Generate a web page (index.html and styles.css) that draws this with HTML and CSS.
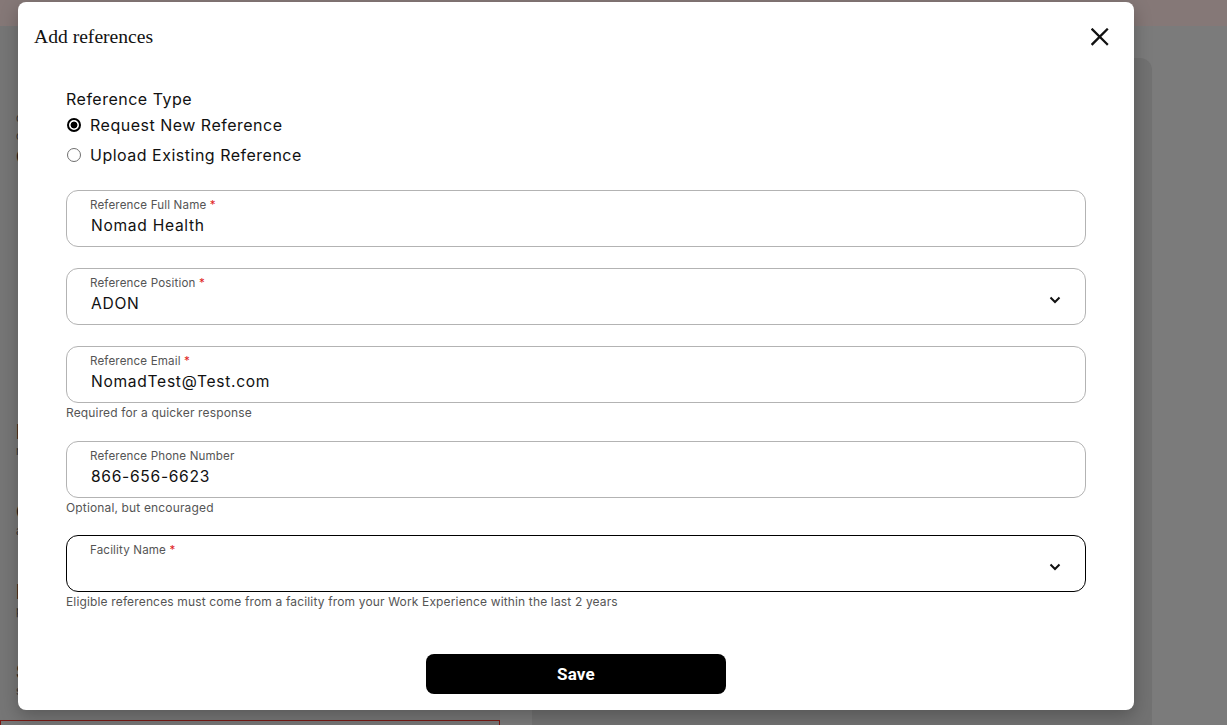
FILE: index.html
```html
<!DOCTYPE html>
<html lang="en">
<head>
<meta charset="utf-8">
<title>Add references</title>
<link rel="stylesheet" href="styles.css">
</head>
<body>
<div class="page">
  <div class="banner"></div>
  <div class="page-main">
    <div class="page-left">
      <div class="bg-item small"><span class="bg-s">c</span><span class="bg-s">c</span><span class="bg-t">C</span></div>
      <div class="bg-item"><span class="bg-t">R</span><span class="bg-s">r</span></div>
      <div class="bg-item"><span class="bg-t">C</span><span class="bg-s">a</span></div>
      <div class="bg-item"><span class="bg-t">P</span><span class="bg-s">p</span></div>
      <div class="bg-item"><span class="bg-t">S</span><span class="bg-s">s</span></div>
      <div class="bg-redbox"></div>
    </div>
    <div class="page-card"></div>
  </div>
</div>

<div class="modal" role="dialog" aria-label="Add references">
  <div class="modal-header">
    <h2 class="modal-title">Add references</h2>
    <button class="close-btn" aria-label="Close">
      <svg width="18" height="18" viewBox="0 0 18 18"><path d="M1.5 1.5 L16 16 M16 1.5 L1.5 16" stroke="#111" stroke-width="2.3" stroke-linecap="square" fill="none"/></svg>
    </button>
  </div>
  <div class="modal-body">
    <div class="section-label">Reference Type</div>
    <label class="radio-row"><span class="radio checked"></span><span>Request New Reference</span></label>
    <label class="radio-row"><span class="radio"></span><span>Upload Existing Reference</span></label>

    <div class="field f-gap">
      <div class="field-label">Reference Full Name <span class="req">*</span></div>
      <div class="field-value">Nomad Health</div>
    </div>

    <div class="field f-gap">
      <div class="field-label">Reference Position <span class="req">*</span></div>
      <div class="field-value">ADON</div>
      <svg class="chev" width="12" height="8" viewBox="0 0 12 8"><path d="M1.5 1.5 L6 6 L10.5 1.5" stroke="#111" stroke-width="2" fill="none"/></svg>
    </div>

    <div class="field">
      <div class="field-label">Reference Email <span class="req">*</span></div>
      <div class="field-value">NomadTest@Test.com</div>
    </div>
    <div class="helper h-gap">Required for a quicker response</div>

    <div class="field">
      <div class="field-label">Reference Phone Number</div>
      <div class="field-value">866-656-6623</div>
    </div>
    <div class="helper h-gap2">Optional, but encouraged</div>

    <div class="field active">
      <div class="field-label">Facility Name <span class="req">*</span></div>
      <div class="field-value"></div>
      <svg class="chev" width="12" height="8" viewBox="0 0 12 8"><path d="M1.5 1.5 L6 6 L10.5 1.5" stroke="#111" stroke-width="2" fill="none"/></svg>
    </div>
    <div class="helper">Eligible references must come from a facility from your Work Experience within the last 2 years</div>

    <div class="actions">
      <button class="save-btn">Save</button>
    </div>
  </div>
</div>
</body>
</html>
```

FILE: styles.css
```css
* { box-sizing: border-box; }
html, body { margin: 0; padding: 0; }
body {
  width: 1227px;
  height: 725px;
  overflow: hidden;
  background: #7b7b7b;
  font-family: "Inter", "Noto Sans", sans-serif;
}

/* background page (dimmed) */
.page { display: flex; flex-direction: column; height: 725px; }
.banner { height: 26px; background: #857877; flex: none; }
.page-main { display: flex; flex: 1; gap: 32px; padding-top: 32px; }
.page-left {
  width: 500px;
  flex: none;
  background: #767676;
  margin-top: -32px;
  padding: 86px 0 0 16px;
  display: flex;
  flex-direction: column;
  gap: 46px;
  position: relative;
}
.bg-item { display: flex; flex-direction: column; gap: 4px; color: #1e1e1e; }
.bg-item.small { margin-bottom: 211px; gap: 6px; }
.bg-t { font-size: 20px; font-weight: 700; line-height: 18px; }
.bg-s { font-size: 11px; line-height: 12px; color: #333; }
.bg-redbox {
  position: absolute;
  left: 0;
  top: 694px;
  width: 500px;
  height: 40px;
  border: 1px solid #7a1a14;
}
.page-card {
  width: 620px;
  flex: none;
  background: #727272;
  border-radius: 12px 12px 0 0;
}

/* modal */
.modal {
  position: absolute;
  left: 18px;
  top: 2px;
  width: 1116px;
  height: 708px;
  background: #fff;
  border-radius: 8px;
  box-shadow: 0 6px 18px rgba(0,0,0,0.25);
}
.modal-header {
  display: flex;
  align-items: center;
  justify-content: space-between;
  padding: 24px 25px 0 16px;
}
.modal-title {
  margin: 0;
  font-family: "Liberation Serif", "DejaVu Serif", serif;
  font-weight: 400;
  font-size: 19.6px;
  line-height: 22px;
  color: #111;
}
.close-btn {
  border: 0;
  background: none;
  padding: 0;
  width: 18px;
  height: 18px;
  display: flex;
  margin-top: -1px;
}
.modal-body {
  padding: 40px 48px 0 48px;
  display: flex;
  flex-direction: column;
}
.section-label {
  font-size: 16px;
  line-height: 20px;
  color: #111;
  letter-spacing: 0.5px;
  margin-top: 1px;
  margin-bottom: 1px;
}
.radio-row {
  display: flex;
  align-items: center;
  gap: 9px;
  height: 30px;
  font-size: 16px;
  color: #111;
  letter-spacing: 0.5px;
}
.radio {
  width: 14px;
  height: 14px;
  border-radius: 50%;
  border: 1.5px solid #6f6f6f;
  flex: none;
  margin-left: 1px;
}
.radio.checked {
  border: 2px solid #000;
  background: radial-gradient(circle, #000 0 3.2px, #fff 3.7px);
}
.field {
  position: relative;
  height: 57px;
  border: 1px solid #b3b3b3;
  border-radius: 12px;
  padding: 7px 24px 0 23px;
}
.radio-row + .field { margin-top: 20px; }
.field.active { border-color: #000; }
.f-gap { margin-bottom: 21px; }
.field-label {
  font-size: 11.6px;
  line-height: 14px;
  color: #555;
  letter-spacing: 0.15px;
}
.req { color: #e02424; }
.field-value {
  margin-top: 3px;
  font-size: 15.6px;
  line-height: 22px;
  color: #111;
  letter-spacing: 0.7px;
  padding-left: 1px;
}
.chev {
  position: absolute;
  right: 24px;
  top: 27px;
}
.helper {
  margin-top: 3px;
  font-size: 12px;
  line-height: 14px;
  color: #555;
  letter-spacing: 0.15px;
}
.h-gap { margin-bottom: 21px; }
.h-gap2 { margin-bottom: 20px; }
.actions {
  display: flex;
  justify-content: center;
  margin-top: 45px;
}
.save-btn {
  width: 300px;
  height: 40px;
  background: #000;
  color: #fff;
  border: 0;
  border-radius: 8px;
  font-family: "Roboto", "Liberation Sans", sans-serif;
  font-weight: 700;
  font-size: 17px;
  letter-spacing: 0.2px;
}
```
